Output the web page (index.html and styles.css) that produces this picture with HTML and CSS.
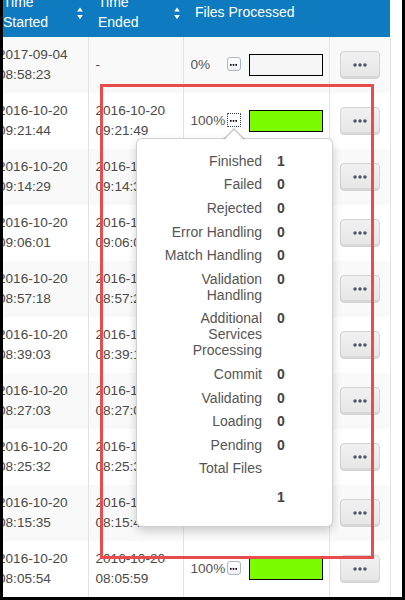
FILE: index.html
```html
<!DOCTYPE html>
<html>
<head>
<meta charset="utf-8">
<link rel="stylesheet" href="styles.css">
</head>
<body>
<div class="frame">
  <div class="scroller">
    <table class="grid">
      <colgroup>
        <col class="c1"><col class="c2"><col class="c3"><col class="c4">
      </colgroup>
      <thead>
        <tr>
          <th class="h1"><div class="th-inner"><span>Time<br>Started</span><svg class="sort" width="6" height="13" viewBox="0 0 6 13"><path d="M3 0.5 L5.8 4.5 H0.2 Z M0.2 8 H5.8 L3 12.2 Z" fill="#fff"/></svg></div></th>
          <th class="h2"><div class="th-inner"><span>Time<br>Ended</span><svg class="sort" width="6" height="13" viewBox="0 0 6 13"><path d="M3 0.5 L5.8 4.5 H0.2 Z M0.2 8 H5.8 L3 12.2 Z" fill="#fff"/></svg></div></th>
          <th class="h3">Files Processed</th>
          <th class="h4"></th>
        </tr>
      </thead>
      <tbody>
        <tr>
          <td>2017-09-04<br>08:58:23</td>
          <td>-</td>
          <td><div class="files"><span class="pct">0%</span><span class="mini"><svg width="7" height="2" viewBox="0 0 7 2"><rect x="0" y="0" width="1.6" height="1.8" fill="#111"/><rect x="2.7" y="0" width="1.6" height="1.8" fill="#111"/><rect x="5.4" y="0" width="1.6" height="1.8" fill="#111"/></svg></span><span class="bar"></span></div></td>
          <td><span class="more"><svg width="14" height="4" viewBox="0 0 14 4"><circle cx="2" cy="2" r="1.7" fill="#4b5566"/><circle cx="7" cy="2" r="1.7" fill="#4b5566"/><circle cx="12" cy="2" r="1.7" fill="#4b5566"/></svg></span></td>
        </tr>
        <tr>
          <td>2016-10-20<br>09:21:44</td>
          <td>2016-10-20<br>09:21:49</td>
          <td><div class="files"><span class="pct">100%</span><span class="mini focus"><svg width="7" height="2" viewBox="0 0 7 2"><rect x="0" y="0" width="1.6" height="1.8" fill="#111"/><rect x="2.7" y="0" width="1.6" height="1.8" fill="#111"/><rect x="5.4" y="0" width="1.6" height="1.8" fill="#111"/></svg></span><span class="bar full"></span></div></td>
          <td><span class="more"><svg width="14" height="4" viewBox="0 0 14 4"><circle cx="2" cy="2" r="1.7" fill="#4b5566"/><circle cx="7" cy="2" r="1.7" fill="#4b5566"/><circle cx="12" cy="2" r="1.7" fill="#4b5566"/></svg></span></td>
        </tr>
        <tr>
          <td>2016-10-20<br>09:14:29</td>
          <td>2016-10-20<br>09:14:35</td>
          <td><div class="files"><span class="pct">100%</span><span class="mini"><svg width="7" height="2" viewBox="0 0 7 2"><rect x="0" y="0" width="1.6" height="1.8" fill="#111"/><rect x="2.7" y="0" width="1.6" height="1.8" fill="#111"/><rect x="5.4" y="0" width="1.6" height="1.8" fill="#111"/></svg></span><span class="bar full"></span></div></td>
          <td><span class="more"><svg width="14" height="4" viewBox="0 0 14 4"><circle cx="2" cy="2" r="1.7" fill="#4b5566"/><circle cx="7" cy="2" r="1.7" fill="#4b5566"/><circle cx="12" cy="2" r="1.7" fill="#4b5566"/></svg></span></td>
        </tr>
        <tr>
          <td>2016-10-20<br>09:06:01</td>
          <td>2016-10-20<br>09:06:07</td>
          <td><div class="files"><span class="pct">100%</span><span class="mini"><svg width="7" height="2" viewBox="0 0 7 2"><rect x="0" y="0" width="1.6" height="1.8" fill="#111"/><rect x="2.7" y="0" width="1.6" height="1.8" fill="#111"/><rect x="5.4" y="0" width="1.6" height="1.8" fill="#111"/></svg></span><span class="bar full"></span></div></td>
          <td><span class="more"><svg width="14" height="4" viewBox="0 0 14 4"><circle cx="2" cy="2" r="1.7" fill="#4b5566"/><circle cx="7" cy="2" r="1.7" fill="#4b5566"/><circle cx="12" cy="2" r="1.7" fill="#4b5566"/></svg></span></td>
        </tr>
        <tr>
          <td>2016-10-20<br>08:57:18</td>
          <td>2016-10-20<br>08:57:24</td>
          <td><div class="files"><span class="pct">100%</span><span class="mini"><svg width="7" height="2" viewBox="0 0 7 2"><rect x="0" y="0" width="1.6" height="1.8" fill="#111"/><rect x="2.7" y="0" width="1.6" height="1.8" fill="#111"/><rect x="5.4" y="0" width="1.6" height="1.8" fill="#111"/></svg></span><span class="bar full"></span></div></td>
          <td><span class="more"><svg width="14" height="4" viewBox="0 0 14 4"><circle cx="2" cy="2" r="1.7" fill="#4b5566"/><circle cx="7" cy="2" r="1.7" fill="#4b5566"/><circle cx="12" cy="2" r="1.7" fill="#4b5566"/></svg></span></td>
        </tr>
        <tr>
          <td>2016-10-20<br>08:39:03</td>
          <td>2016-10-20<br>08:39:10</td>
          <td><div class="files"><span class="pct">100%</span><span class="mini"><svg width="7" height="2" viewBox="0 0 7 2"><rect x="0" y="0" width="1.6" height="1.8" fill="#111"/><rect x="2.7" y="0" width="1.6" height="1.8" fill="#111"/><rect x="5.4" y="0" width="1.6" height="1.8" fill="#111"/></svg></span><span class="bar full"></span></div></td>
          <td><span class="more"><svg width="14" height="4" viewBox="0 0 14 4"><circle cx="2" cy="2" r="1.7" fill="#4b5566"/><circle cx="7" cy="2" r="1.7" fill="#4b5566"/><circle cx="12" cy="2" r="1.7" fill="#4b5566"/></svg></span></td>
        </tr>
        <tr>
          <td>2016-10-20<br>08:27:03</td>
          <td>2016-10-20<br>08:27:08</td>
          <td><div class="files"><span class="pct">100%</span><span class="mini"><svg width="7" height="2" viewBox="0 0 7 2"><rect x="0" y="0" width="1.6" height="1.8" fill="#111"/><rect x="2.7" y="0" width="1.6" height="1.8" fill="#111"/><rect x="5.4" y="0" width="1.6" height="1.8" fill="#111"/></svg></span><span class="bar full"></span></div></td>
          <td><span class="more"><svg width="14" height="4" viewBox="0 0 14 4"><circle cx="2" cy="2" r="1.7" fill="#4b5566"/><circle cx="7" cy="2" r="1.7" fill="#4b5566"/><circle cx="12" cy="2" r="1.7" fill="#4b5566"/></svg></span></td>
        </tr>
        <tr>
          <td>2016-10-20<br>08:25:32</td>
          <td>2016-10-20<br>08:25:37</td>
          <td><div class="files"><span class="pct">100%</span><span class="mini"><svg width="7" height="2" viewBox="0 0 7 2"><rect x="0" y="0" width="1.6" height="1.8" fill="#111"/><rect x="2.7" y="0" width="1.6" height="1.8" fill="#111"/><rect x="5.4" y="0" width="1.6" height="1.8" fill="#111"/></svg></span><span class="bar full"></span></div></td>
          <td><span class="more"><svg width="14" height="4" viewBox="0 0 14 4"><circle cx="2" cy="2" r="1.7" fill="#4b5566"/><circle cx="7" cy="2" r="1.7" fill="#4b5566"/><circle cx="12" cy="2" r="1.7" fill="#4b5566"/></svg></span></td>
        </tr>
        <tr>
          <td>2016-10-20<br>08:15:35</td>
          <td>2016-10-20<br>08:15:41</td>
          <td><div class="files"><span class="pct">100%</span><span class="mini"><svg width="7" height="2" viewBox="0 0 7 2"><rect x="0" y="0" width="1.6" height="1.8" fill="#111"/><rect x="2.7" y="0" width="1.6" height="1.8" fill="#111"/><rect x="5.4" y="0" width="1.6" height="1.8" fill="#111"/></svg></span><span class="bar full"></span></div></td>
          <td><span class="more"><svg width="14" height="4" viewBox="0 0 14 4"><circle cx="2" cy="2" r="1.7" fill="#4b5566"/><circle cx="7" cy="2" r="1.7" fill="#4b5566"/><circle cx="12" cy="2" r="1.7" fill="#4b5566"/></svg></span></td>
        </tr>
        <tr>
          <td>2016-10-20<br>08:05:54</td>
          <td>2016-10-20<br>08:05:59</td>
          <td><div class="files"><span class="pct">100%</span><span class="mini"><svg width="7" height="2" viewBox="0 0 7 2"><rect x="0" y="0" width="1.6" height="1.8" fill="#111"/><rect x="2.7" y="0" width="1.6" height="1.8" fill="#111"/><rect x="5.4" y="0" width="1.6" height="1.8" fill="#111"/></svg></span><span class="bar full"></span></div></td>
          <td><span class="more"><svg width="14" height="4" viewBox="0 0 14 4"><circle cx="2" cy="2" r="1.7" fill="#4b5566"/><circle cx="7" cy="2" r="1.7" fill="#4b5566"/><circle cx="12" cy="2" r="1.7" fill="#4b5566"/></svg></span></td>
        </tr>
      </tbody>
    </table>
  </div>

  <div class="popover">
    <table class="stats">
      <tr><td class="lbl">Finished</td><td class="val">1</td></tr>
      <tr><td class="lbl">Failed</td><td class="val">0</td></tr>
      <tr><td class="lbl">Rejected</td><td class="val">0</td></tr>
      <tr><td class="lbl">Error Handling</td><td class="val">0</td></tr>
      <tr><td class="lbl">Match Handling</td><td class="val">0</td></tr>
      <tr><td class="lbl">Validation Handling</td><td class="val">0</td></tr>
      <tr><td class="lbl">Additional Services Processing</td><td class="val">0</td></tr>
      <tr><td class="lbl">Commit</td><td class="val">0</td></tr>
      <tr><td class="lbl">Validating</td><td class="val">0</td></tr>
      <tr><td class="lbl">Loading</td><td class="val">0</td></tr>
      <tr><td class="lbl">Pending</td><td class="val">0</td></tr>
      <tr><td class="lbl">Total Files</td><td class="val"></td></tr>
      <tr class="total"><td class="lbl"></td><td class="val">1</td></tr>
    </table>
  </div>

  <div class="annot"></div>
</div>
</body>
</html>
```

FILE: styles.css
```css
html, body {
  margin: 0;
  padding: 0;
  background: #fff;
}

body {
  font-family: "Liberation Sans", Arial, sans-serif;
  font-size: 14px;
  color: #444;
}

.frame {
  position: relative;
  width: 405px;
  height: 600px;
  box-sizing: border-box;
  border-left: 3px solid #000;
  border-right: 3px solid #000;
  border-bottom: 3px solid #000;
  overflow: hidden;
  background: #fff;
}

.scroller {
  margin-top: -13px;
  margin-left: -12px;
}

.grid {
  border-collapse: collapse;
  table-layout: fixed;
  width: 399px;
}

.c1 { width: 97px; }
.c2 { width: 95px; }
.c3 { width: 146px; }
.c4 { width: 61px; }

.grid th {
  height: 50px;
  padding: 0 5px 0 12px;
  background: #0e7abf;
  color: #fff;
  font-weight: normal;
  text-align: left;
  vertical-align: middle;
  line-height: 20px;
  box-sizing: border-box;
}

.grid th.h2 { padding-left: 10px; padding-right: 3px; }

.th-inner {
  display: flex;
  align-items: center;
  justify-content: space-between;
}

.sort {
  display: block;
  margin-top: 3px;
}

.grid td {
  height: 56px;
  box-sizing: border-box;
  padding: 8px 6px 8px 7px;
  line-height: 20px;
  font-size: 13.6px;
  border-left: 1px solid #e3e3e3;
  vertical-align: middle;
  white-space: nowrap;
  color: #4a4a4a;
}

.grid td:first-child { border-left: none; }

.grid tbody tr:nth-child(odd) td { background: #f9f9f9; }
.grid tbody tr:nth-child(even) td { background: #fff; }
.grid tbody td:last-child { border-right: 1px solid #e3e3e3; }

.files {
  display: flex;
  align-items: center;
}

.pct {
  width: 36px;
  flex: none;
  color: #555;
}

.mini {
  flex: none;
  display: flex;
  align-items: flex-end;
  justify-content: center;
  width: 14px;
  height: 14px;
  box-sizing: border-box;
  padding-bottom: 4px;
  border: 1px solid #a9b8c8;
  border-radius: 3px;
  background: linear-gradient(#fff, #eef0f2);
  margin-top: -3px;
}

.mini svg { display: block; }

.mini.focus {
  border: 1px dotted #2a3a66;
  border-radius: 1px;
  background: #fff;
}

.bar {
  flex: none;
  width: 74px;
  height: 22px;
  box-sizing: border-box;
  border: 1px solid #000;
  background: #f6f6f6;
  margin-left: 8px;
}

.bar.full { background: #7cfc00; }

.grid td:last-child {
  padding: 0 10px;
  text-align: center;
}

.more {
  display: inline-flex;
  align-items: center;
  justify-content: center;
  width: 40px;
  height: 28px;
  box-sizing: border-box;
  border: 1px solid #d4d4d4;
  border-radius: 4px;
  background: linear-gradient(#f1f1f1, #e6e6e6);
  box-shadow: inset 0 -2px 0 #d8d8d8;
  vertical-align: middle;
}

.more svg { display: block; }

/* popover */
.popover {
  position: absolute;
  left: 133px;
  top: 138px;
  width: 197px;
  box-sizing: border-box;
  background: #fff;
  border: 1px solid rgba(0, 0, 0, 0.18);
  border-radius: 6px;
  box-shadow: 0 4px 10px rgba(0, 0, 0, 0.18);
  padding: 10px 10px 10px 25px;
}

.popover::before,
.popover::after {
  content: "";
  position: absolute;
  width: 0;
  height: 0;
  border-left: 11px solid transparent;
  border-right: 11px solid transparent;
}

.popover::before {
  left: 86px;
  top: -11px;
  border-bottom: 11px solid rgba(0, 0, 0, 0.22);
}

.popover::after {
  left: 87px;
  top: -9px;
  border-left-width: 10px;
  border-right-width: 10px;
  border-bottom: 10px solid #fff;
}

.stats {
  border-collapse: collapse;
}

.stats td {
  padding: 3.8px 0;
  line-height: 16px;
  vertical-align: top;
}

.stats .lbl {
  width: 100px;
  text-align: right;
  padding-right: 15px;
  color: #555;
}

.stats .val {
  font-weight: bold;
  color: #444;
}

.stats .total td {
  padding-top: 9px;
  padding-bottom: 11px;
}

.annot {
  position: absolute;
  left: 97px;
  top: 84px;
  width: 274px;
  height: 475px;
  box-sizing: border-box;
  border: 3px solid #e94c4c;
}
```
